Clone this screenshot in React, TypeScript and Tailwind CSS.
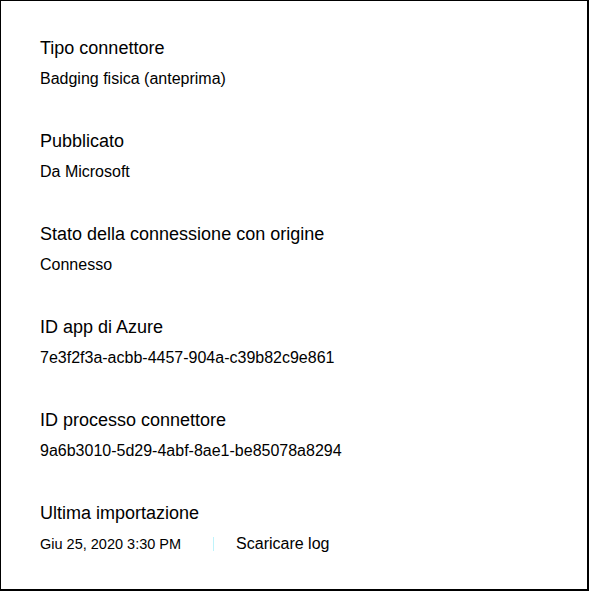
import React from 'react';

// Connector detail panel: a list of label / value pairs.
interface DetailItem {
  label: string;
  value: string;
}

const details: DetailItem[] = [
  { label: 'Tipo connettore', value: 'Badging fisica (anteprima)' },
  { label: 'Pubblicato', value: 'Da Microsoft' },
  { label: 'Stato della connessione con origine', value: 'Connesso' },
  { label: 'ID app di Azure', value: '7e3f2f3a-acbb-4457-904a-c39b82c9e861' },
  { label: 'ID processo connettore', value: '9a6b3010-5d29-4abf-8ae1-be85078a8294' },
];

const font = { fontFamily: '"Liberation Sans", Arial, sans-serif' };

const App: React.FC = () => {
  return (
    <div
      className="w-[589px] h-[591px] bg-white border-l border-t border-r-2 border-b-2 border-black pl-[39px] pt-[35px] text-black"
      style={font}
    >
      <div className="flex flex-col gap-[39px]">
        {details.map((item) => (
          <div key={item.label} className="flex flex-col">
            <p className="text-[18px] leading-6">{item.label}</p>
            <p className="mt-2 text-[16px] leading-[22px]">{item.value}</p>
          </div>
        ))}

        {/* Last import row, with log download link */}
        <div className="flex flex-col">
          <p className="text-[18px] leading-6">Ultima importazione</p>
          <div className="mt-2 flex items-center h-[22px]">
            <span className="text-[14.5px] leading-[22px]">Giu 25, 2020 3:30 PM</span>
            <span className="ml-[32px] w-px h-[14px] bg-[#bff3fb]" />
            <span className="ml-[22px] text-[16px] leading-[22px]">Scaricare log</span>
          </div>
        </div>
      </div>
    </div>
  );
};

export default App;
